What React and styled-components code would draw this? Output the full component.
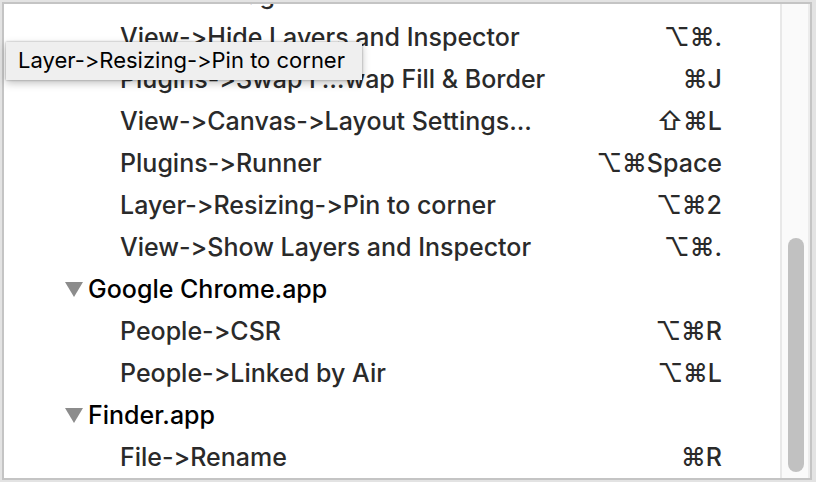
import React from "react";
import styled, { createGlobalStyle } from "styled-components";

const GlobalStyle = createGlobalStyle`
  * { box-sizing: border-box; }
  body {
    margin: 0;
    background: #e3e3e3;
    font-family: Inter, "Liberation Sans", sans-serif;
    font-weight: 500;
    font-variant-ligatures: none;
    font-feature-settings: "calt" 0;
  }
`;

const Page = styled.main`
  position: relative;
  height: 100vh;
  padding: 2px;
`;

const Panel = styled.section`
  display: flex;
  height: 100%;
  margin-right: 2px;
  border: 2px solid #c4c4c4;
  background: #fff;
  overflow: hidden;
`;

const List = styled.div`
  flex: 1;
  min-width: 0;
  display: flex;
  flex-direction: column;
  justify-content: flex-end;
`;

const Row = styled.div`
  display: flex;
  flex: none;
  justify-content: space-between;
  align-items: center;
  height: 42px;
  padding: 0 58px 0 116px;
  font-size: 25px;
  line-height: 42px;
  white-space: nowrap;
  color: #2a2a2a;
`;

const GroupButton = styled.button`
  display: flex;
  flex: none;
  align-items: center;
  gap: 5px;
  height: 42px;
  padding: 0 0 0 61px;
  border: 0;
  background: none;
  font: inherit;
  font-size: 25px;
  line-height: 42px;
  color: #000;
`;

const Track = styled.div`
  display: flex;
  align-items: flex-end;
  justify-content: center;
  width: 30px;
  padding: 0 0 6px 2px;
  border-left: 2px solid #e8e8e8;
  border-right: 2px solid #ececec;
  background: #fafafa;
`;

const Thumb = styled.div`
  width: 16px;
  height: 50%;
  border-radius: 8px;
  background: #c1c1c1;
`;

const Tooltip = styled.div`
  position: absolute;
  left: 6px;
  top: 42px;
  height: 38px;
  padding: 0 17px 0 12px;
  background: #efefef;
  box-shadow: 0 0 2px rgba(0, 0, 0, 0.35), 0 3px 8px rgba(0, 0, 0, 0.25);
  font-size: 22px;
  font-weight: 400;
  line-height: 36px;
  white-space: nowrap;
  color: #000;
`;

const groups = [
  {
    items: [
      ["Insert->Image", "⌘E"],
      ["View->Hide Layers and Inspector", "⌥⌘."],
      ["Plugins->Swap F…wap Fill & Border", "⌘J"],
      ["View->Canvas->Layout Settings...", "⇧⌘L"],
      ["Plugins->Runner", "⌥⌘Space"],
      ["Layer->Resizing->Pin to corner", "⌥⌘2"],
      ["View->Show Layers and Inspector", "⌥⌘."],
    ],
  },
  {
    name: "Google Chrome.app",
    items: [
      ["People->CSR", "⌥⌘R"],
      ["People->Linked by Air", "⌥⌘L"],
    ],
  },
  { name: "Finder.app", items: [["File->Rename", "⌘R"]] },
];

function Disclosure() {
  return (
    <svg width="18" height="15" viewBox="0 0 18 15" aria-hidden="true">
      <path d="M0 0H18L9 15Z" fill="#8c8c8c" />
    </svg>
  );
}

export default function App() {
  return (
    <>
      <GlobalStyle />
      <Page>
        <Panel>
          <List>
            {groups.map((group, index) => (
              <React.Fragment key={index}>
                {group.name && (
                  <GroupButton type="button" aria-expanded="true">
                    <Disclosure />
                    {group.name}
                  </GroupButton>
                )}
                {group.items.map(([label, keys]) => (
                  <Row key={label}>
                    <span>{label}</span>
                    <span>{keys}</span>
                  </Row>
                ))}
              </React.Fragment>
            ))}
          </List>
          <Track>
            <Thumb />
          </Track>
        </Panel>
        <Tooltip role="tooltip">Layer-&gt;Resizing-&gt;Pin to corner</Tooltip>
      </Page>
    </>
  );
}
